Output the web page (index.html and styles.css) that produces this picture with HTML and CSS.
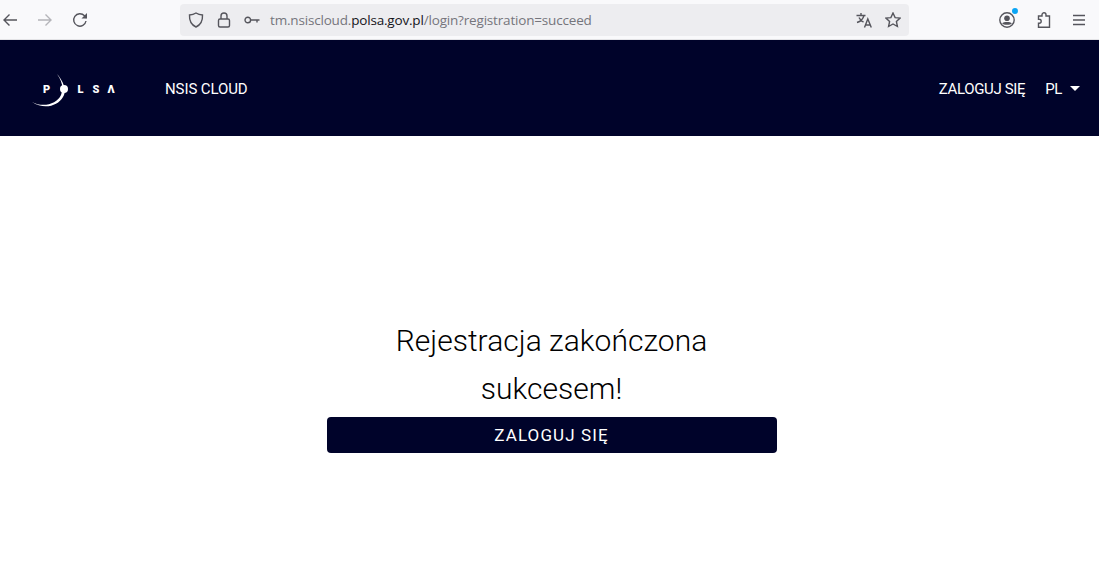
FILE: index.html
```html
<!DOCTYPE html>
<html lang="pl">
<head>
    <meta charset="UTF-8">
    <meta name="viewport" content="width=device-width, initial-scale=1.0">
    <title>NSIS Cloud</title>
    <link rel="stylesheet" href="styles.css">
</head>
<body>
    <div class="browser-bar">
        <div class="nav-buttons">
            <svg class="icon" viewBox="0 0 16 16"><path d="M15 8H2M7.500 2.500 2 8l5.500 5.500"/></svg>
            <svg class="icon icon-off" viewBox="0 0 16 16"><path d="M1 8h13M8.500 2.500 14 8l-5.500 5.500"/></svg>
            <svg class="icon" viewBox="0 0 16 16"><path d="M14 9a6.200 6.200 0 1 1-1.500-5.200L14.500 6"/><path class="solid" d="M15 1v5.500H9.500z"/></svg>
        </div>
        <div class="url-box">
            <svg class="icon" viewBox="0 0 16 16"><path d="M8 1c2 1.300 4 1.900 6.500 2 .3 5.500-1.700 9.800-6.500 12C3.200 12.800 1.200 8.500 1.500 3 4 2.900 6 2.300 8 1z"/></svg>
            <svg class="icon" viewBox="0 0 16 16"><rect x="2.500" y="7" width="11" height="8" rx="1.500"/><path d="M5 7V4a3 3 0 0 1 6 0v3"/></svg>
            <svg class="icon" viewBox="0 0 16 16"><circle cx="3.800" cy="8" r="2.800"/><path d="M6.600 8H15.500M13 8v2.500"/></svg>
            <span class="url-text">tm.nsiscloud.<b>polsa.gov.pl</b>/login?registration=succeed</span>
            <svg class="icon icon-end" viewBox="0 0 16 16"><path d="M.5 3.500h9M5 1v2.500M8 3.500C7 7 4.500 9.500 1 10.500M3 5.500c1 2.200 2.700 3.700 4.500 4.500"/><path d="M8.500 15.500 11.800 7l3.500 8.500M9.500 13h4.800"/></svg>
            <svg class="icon" viewBox="0 0 16 16"><path d="m8 1 2.100 4.600 5 .5-3.700 3.400 1 5L8 12l-4.400 2.500 1-5L.9 6.100l5-.5z"/></svg>
        </div>
        <div class="tool-buttons">
            <span class="account">
                <svg class="icon" viewBox="0 0 16 16"><circle cx="8" cy="8" r="7.200"/><circle class="solid" cx="8" cy="6.200" r="2.800"/><path class="solid" d="M3.200 11.200c1.500-1.700 8.100-1.700 9.600 0-1 2-8.600 2-9.600 0z"/></svg>
                <span class="account-dot"></span>
            </span>
            <svg class="icon" viewBox="0 0 16 16"><path d="M7 4V2.800a2 2 0 0 1 4 0V4h3.500v11.300H3.500v-4h.7a2 2 0 0 0 0-4h-.7V4z"/></svg>
            <svg class="icon" viewBox="0 0 16 16"><path d="M2 3.500h12M2 8h12M2 12.500h12"/></svg>
        </div>
    </div>

    <header class="site-header">
        <a class="logo" href="#">
            <svg class="logo-arc" viewBox="0 0 40 36"><path d="M27 1c7 8 10 17 6 23-5 9-19 13-31 5 11 6 25 2 29-7 3-7 1-14-4-21z"/></svg>
            <span class="logo-letter logo-p">P</span>
            <span class="logo-ball"></span>
            <span class="logo-letter">L</span>
            <span class="logo-letter">S</span>
            <span class="logo-letter">Λ</span>
        </a>
        <a class="brand" href="#">NSIS CLOUD</a>
        <nav class="header-nav">
            <a href="#">ZALOGUJ SIĘ</a>
            <a class="lang" href="#">PL<span class="caret"></span></a>
        </nav>
    </header>

    <main class="content">
        <div class="message">
            <h2>Rejestracja zakończona sukcesem!</h2>
            <button class="login-btn">ZALOGUJ SIĘ</button>
        </div>
    </main>
</body>
</html>
```

FILE: styles.css
```css
html, body {
    height: 100%;
}

body {
    margin: 0;
    display: flex;
    flex-direction: column;
    background-color: #fff;
    font-family: "Roboto", "Liberation Sans", sans-serif;
}

a {
    color: #fff;
    text-decoration: none;
}

.browser-bar {
    height: 39px;
    flex-shrink: 0;
    display: flex;
    align-items: center;
    background-color: #f9f9fb;
    border-bottom: 1px solid #e3e3e6;
}

.icon {
    width: 16px;
    height: 16px;
    flex-shrink: 0;
    fill: none;
    stroke: #55555c;
    stroke-width: 1.400;
}

.icon .solid {
    fill: #55555c;
    stroke: none;
}

.icon-off {
    stroke: #b4b4b9;
}

.nav-buttons {
    width: 180px;
    flex-shrink: 0;
    display: flex;
    align-items: center;
    gap: 19px;
    padding-left: 2px;
    box-sizing: border-box;
}

.url-box {
    width: 729px;
    height: 32px;
    flex-shrink: 0;
    display: flex;
    align-items: center;
    gap: 12px;
    padding: 0 8px;
    box-sizing: border-box;
    background-color: #ededf0;
    border-radius: 4px;
}

.url-text {
    margin-left: -2px;
    font-family: "Open Sans", sans-serif;
    font-size: 13.500px;
    letter-spacing: -0.18px;
    color: #75757c;
}

.url-text b {
    font-weight: 400;
    color: #15141a;
}

.icon-end {
    margin-left: auto;
    margin-right: 1px;
}

.tool-buttons {
    flex: 1;
    display: flex;
    align-items: center;
    gap: 20px;
    padding-left: 90px;
}

.account {
    position: relative;
    height: 16px;
}

.account-dot {
    position: absolute;
    top: -4px;
    right: -3px;
    width: 6px;
    height: 6px;
    border-radius: 50%;
    background-color: #0aa5f5;
}

.site-header {
    height: 96px;
    flex-shrink: 0;
    display: flex;
    align-items: center;
    padding: 2px 19px 0 43px;
    box-sizing: border-box;
    background-color: #00032a;
    color: #fff;
}

.logo {
    position: relative;
    width: 122px;
    display: flex;
    align-items: center;
    font-size: 11px;
    font-weight: 900;
}

.logo-letter {
    width: 15px;
}

.logo-p {
    width: 16.500px;
}

.logo-ball {
    width: 8px;
    height: 8px;
    margin-right: 10px;
    border-radius: 50%;
    background-color: #fff;
}

.logo-arc {
    position: absolute;
    left: -13px;
    top: -10px;
    width: 40px;
    height: 36px;
    fill: #fff;
}

.brand {
    font-size: 15px;
    letter-spacing: -0.1px;
}

.header-nav {
    margin-left: auto;
    display: flex;
    align-items: center;
    gap: 20px;
    font-size: 15px;
    letter-spacing: -0.35px;
}

.caret {
    display: inline-block;
    margin-left: 8px;
    vertical-align: 3px;
    border-top: 5px solid #fff;
    border-left: 5px solid transparent;
    border-right: 5px solid transparent;
}

.content {
    flex: 1;
    display: flex;
    justify-content: center;
}

.message {
    width: 450px;
    margin: 181px 0 0 4px;
    text-align: center;
}

.message h2 {
    margin: 0;
    padding: 0 40px;
    font-size: 30px;
    font-weight: 300;
    line-height: 48px;
    letter-spacing: 0.03px;
    color: #000;
}

.login-btn {
    display: block;
    width: 100%;
    height: 36px;
    margin-top: 4px;
    border: none;
    border-radius: 4px;
    background-color: #00032a;
    color: #fff;
    font-family: inherit;
    font-size: 17px;
    letter-spacing: 1.100px;
}
```
